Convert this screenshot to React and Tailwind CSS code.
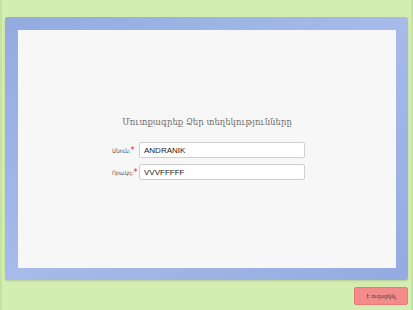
import React from 'react';

const App = () => {
  return (
    <div className="w-[413px] h-[310px] bg-[#d4eeb1] border-l-2 border-r-2 border-[#c6e2a2] flex flex-col px-[3px] pt-[17px] overflow-hidden">
      {/* blue frame */}
      <div className="h-[263px] w-[403px] rounded-[2px] bg-gradient-to-br from-[#93abdf] via-[#a6bbe9] to-[#93abdf] pl-[13px] pr-[12px] pt-[13px] pb-[12px] shadow-[0_1px_2px_rgba(0,0,0,0.15)]">
        <div className="h-full w-full bg-[#f7f7f7] flex flex-col items-center pt-[85px]">
          <h1 className="text-[9.5px] leading-[13px] text-[#707070] font-['DejaVu_Serif_Condensed','DejaVu_Serif',serif]">
            Մուտքագրեք Ձեր տեղեկությունները
          </h1>

          <div className="mt-[14px] flex flex-col gap-[6px] self-start ml-[94px]">
            <div className="flex items-center">
              <label className="w-[27px] text-[6px] text-[#555] font-['DejaVu_Sans_Condensed','DejaVu_Sans',sans-serif] whitespace-nowrap">
                Անուն:<span className="text-[#d9242a] text-[9px] align-top leading-[8px]">*</span>
              </label>
              <input
                readOnly
                value="ANDRANIK"
                className="w-[166px] h-[16px] bg-white border border-[#cfcfcf] rounded-[2px] px-[4px] text-[8px] text-[#222] font-['Liberation_Sans',sans-serif] outline-none"
              />
            </div>
            <div className="flex items-center">
              <label className="w-[27px] text-[6px] text-[#555] font-['DejaVu_Sans_Condensed','DejaVu_Sans',sans-serif] whitespace-nowrap">
                Որակդ:<span className="text-[#d9242a] text-[9px] align-top leading-[8px]">*</span>
              </label>
              <input
                readOnly
                value="VVVFFFFF"
                className="w-[166px] h-[16px] bg-white border border-[#cfcfcf] rounded-[2px] px-[4px] text-[8px] text-[#222] font-['Liberation_Sans',sans-serif] outline-none"
              />
            </div>
          </div>
        </div>
      </div>

      <div className="flex justify-end mt-[7px]">
        <button className="w-[54px] h-[18px] bg-[#f48b8b] border border-[#e77a7a] rounded-[2px] text-[5.5px] text-[#333] font-['DejaVu_Serif_Condensed','DejaVu_Serif',serif]">
          Է ուղարկել
        </button>
      </div>
    </div>
  );
};

export default App;
